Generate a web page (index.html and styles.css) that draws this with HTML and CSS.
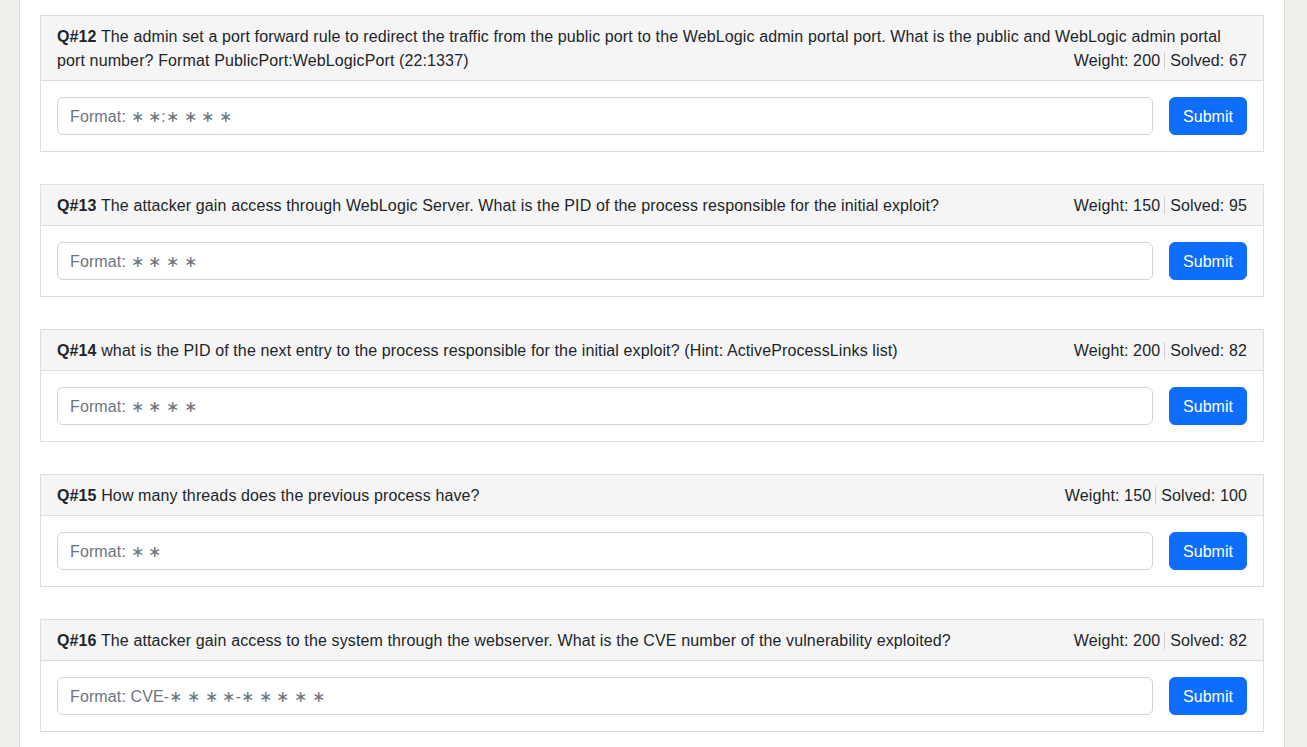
FILE: index.html
```html
<!DOCTYPE html>
<html lang="en">
<head>
<meta charset="utf-8">
<title>Questions</title>
<link rel="stylesheet" href="styles.css">
</head>
<body>
<main class="container">
  <section class="card">
    <div class="card-header">
      <b>Q#12</b> The admin set a port forward rule to redirect the traffic from the public port to the WebLogic admin portal port. What is the public and WebLogic admin portal port number? Format PublicPort:WebLogicPort (22:1337)<span class="stats"><span class="weight">Weight: 200</span><span class="solved">Solved: 67</span></span>
    </div>
    <form class="card-body">
      <input class="answer" type="text" placeholder="Format: ∗ ∗:∗ ∗ ∗ ∗">
      <button class="btn" type="button">Submit</button>
    </form>
  </section>

  <section class="card">
    <div class="card-header">
      <b>Q#13</b> The attacker gain access through WebLogic Server. What is the PID of the process responsible for the initial exploit?<span class="stats"><span class="weight">Weight: 150</span><span class="solved">Solved: 95</span></span>
    </div>
    <form class="card-body">
      <input class="answer" type="text" placeholder="Format: ∗ ∗ ∗ ∗">
      <button class="btn" type="button">Submit</button>
    </form>
  </section>

  <section class="card">
    <div class="card-header">
      <b>Q#14</b> what is the PID of the next entry to the process responsible for the initial exploit? (Hint: ActiveProcessLinks list)<span class="stats"><span class="weight">Weight: 200</span><span class="solved">Solved: 82</span></span>
    </div>
    <form class="card-body">
      <input class="answer" type="text" placeholder="Format: ∗ ∗ ∗ ∗">
      <button class="btn" type="button">Submit</button>
    </form>
  </section>

  <section class="card">
    <div class="card-header">
      <b>Q#15</b> How many threads does the previous process have?<span class="stats"><span class="weight">Weight: 150</span><span class="solved">Solved: 100</span></span>
    </div>
    <form class="card-body">
      <input class="answer" type="text" placeholder="Format: ∗ ∗">
      <button class="btn" type="button">Submit</button>
    </form>
  </section>

  <section class="card">
    <div class="card-header">
      <b>Q#16</b> The attacker gain access to the system through the webserver. What is the CVE number of the vulnerability exploited?<span class="stats"><span class="weight">Weight: 200</span><span class="solved">Solved: 82</span></span>
    </div>
    <form class="card-body">
      <input class="answer" type="text" placeholder="Format: CVE-∗ ∗ ∗ ∗-∗ ∗ ∗ ∗ ∗">
      <button class="btn" type="button">Submit</button>
    </form>
  </section>
</main>
</body>
</html>
```

FILE: styles.css
```css
* {
  box-sizing: border-box;
}

html, body {
  margin: 0;
  padding: 0;
}

body {
  background: #f0efeb;
  font-family: "Liberation Sans", Arial, sans-serif;
  font-size: 16px;
  line-height: 24px;
  color: #212529;
  overflow: hidden;
}

.container {
  margin-left: 19px;
  width: 1266px;
  min-height: 747px;
  background: #ffffff;
  border-left: 1px solid #dcdcd8;
  border-right: 1px solid #dcdcd8;
  padding: 15px 20px 20px;
}

.card {
  border: 1px solid #dedede;
  margin-bottom: 32px;
  background: #fff;
}

.card-header {
  background: #f5f5f5;
  border-bottom: 1px solid #dedede;
  padding: 9px 16px 7px;
  display: flow-root;
  letter-spacing: 0.12px;
}

.card-header b {
  font-weight: 700;
}

.stats {
  float: right;
}

.solved {
  border-left: 1px solid #cfcfcf;
  margin-left: 4px;
  padding-left: 5px;
}

.card-body {
  display: flex;
  gap: 16px;
  padding: 16px;
  margin: 0;
}

.answer {
  flex: 1;
  height: 38px;
  border: 1px solid #ced4da;
  border-radius: 6px;
  padding: 7px 12px 5px;
  font-family: inherit;
  font-size: 16px;
  letter-spacing: 0.12px;
  color: #212529;
}

.answer::placeholder {
  color: #6c757d;
}

.btn {
  height: 38px;
  border: 1px solid #0d6efd;
  background: #0d6efd;
  color: #fff;
  border-radius: 6px;
  padding: 7px 12px 5px;
  font-family: inherit;
  font-size: 16px;
  line-height: 24px;
  width: 78px;
}
```
